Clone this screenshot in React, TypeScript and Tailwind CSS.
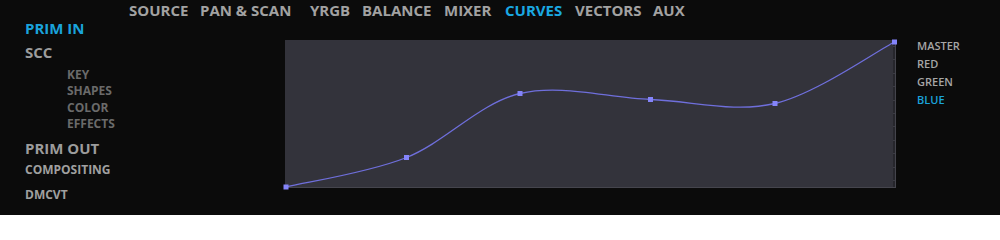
import React from "react";

const pts: [number, number][] = [
  [1, 147],
  [121.5, 117.5],
  [235, 53.5],
  [365.5, 59.5],
  [490, 63.5],
  [609.5, 2],
];

function catmull(p: [number, number][]): string {
  let d = `M${p[0][0]},${p[0][1]}`;
  for (let i = 0; i < p.length - 1; i++) {
    const p0 = p[i - 1] || p[i];
    const p1 = p[i];
    const p2 = p[i + 1];
    const p3 = p[i + 2] || p[i + 1];
    const c1x = p1[0] + (p2[0] - p0[0]) / 6;
    const c1y = p1[1] + (p2[1] - p0[1]) / 6;
    const c2x = p2[0] - (p3[0] - p1[0]) / 6;
    const c2y = p2[1] - (p3[1] - p1[1]) / 6;
    d += ` C${c1x.toFixed(2)},${c1y.toFixed(2)} ${c2x.toFixed(2)},${c2y.toFixed(2)} ${p2[0]},${p2[1]}`;
  }
  return d;
}

const tabs: { label: string; w: string; active?: boolean }[] = [
  { label: "SOURCE", w: "w-[71px]" },
  { label: "PAN & SCAN", w: "w-[110px]" },
  { label: "YRGB", w: "w-[52px]" },
  { label: "BALANCE", w: "w-[82px]" },
  { label: "MIXER", w: "w-[61px]" },
  { label: "CURVES", w: "w-[70px]", active: true },
  { label: "VECTORS", w: "w-[78px]" },
  { label: "AUX", w: "w-[40px]" },
];

export default function App() {
  const ticks = Array.from({ length: 11 }, (_, i) => i);
  return (
    <div
      className="w-[1000px] h-[215px] bg-[#0b0b0b] flex overflow-hidden"
      style={{ fontFamily: '"Open Sans", "Noto Sans", sans-serif' }}
    >
      {/* Left nav */}
      <div className="w-[129px] shrink-0 pl-[25px] pt-[18px] flex flex-col font-bold">
        <div className="h-[20px] leading-[20px] text-[15px] text-[#1aa3dc] whitespace-nowrap">PRIM IN</div>
        <div className="mt-[4px] h-[20px] leading-[20px] text-[15px] text-[#9c9c9c] whitespace-nowrap">SCC</div>
        <div className="mt-[5px] pl-[42px] flex flex-col text-[12px] leading-[16.4px] text-[#6a6a6a]">
          <div>KEY</div>
          <div>SHAPES</div>
          <div>COLOR</div>
          <div>EFFECTS</div>
        </div>
        <div className="mt-[5px] h-[20px] leading-[20px] text-[15px] text-[#9c9c9c] whitespace-nowrap">PRIM OUT</div>
        <div className="mt-[4px] h-[16px] leading-[16px] text-[12px] text-[#a0a0a0] whitespace-nowrap">COMPOSITING</div>
        <div className="mt-[9px] h-[16px] leading-[16px] text-[12px] text-[#a0a0a0] whitespace-nowrap">DMCVT</div>
      </div>

      {/* Main */}
      <div className="flex flex-col">
        <div className="h-[20px] flex font-bold text-[15px] leading-[20px] whitespace-nowrap">
          {tabs.map((t) => (
            <div key={t.label} className={`${t.w} shrink-0 ${t.active ? "text-[#1aa8e2]" : "text-[#a2a2a2]"}`}>
              {t.label}
            </div>
          ))}
        </div>
        <div className="flex">
          <div className="ml-[156px] mt-[20px] w-[611px] h-[148px] bg-[#33333b] relative border-b border-[#45454d]">
            <div className="absolute right-[1px] top-0 bottom-0 w-[2px] bg-[#26262c] flex flex-col justify-between py-[6px]">
              {ticks.map((i) => (
                <div key={i} className="h-[1px] w-[2px] bg-[#3c3c44]" />
              ))}
            </div>
            <div className="absolute right-0 top-0 bottom-0 w-[1px] bg-[#44444c]" />
            <svg className="absolute inset-0" width="611" height="148" viewBox="0 0 611 148" overflow="visible">
              <path d={catmull(pts)} fill="none" stroke="#6f6fdc" strokeWidth="1.3" />
              {pts.map(([x, y], i) => (
                <rect key={i} x={x - 2.5} y={y - 2.5} width="5" height="5" fill="#8484fa" />
              ))}
            </svg>
          </div>
          <div className="ml-[21px] mt-[17px] flex flex-col text-[11px] leading-[18px] font-semibold text-[#a6a6a6] whitespace-nowrap">
            <div>MASTER</div>
            <div>RED</div>
            <div>GREEN</div>
            <div className="text-[#1aa3dc]">BLUE</div>
          </div>
        </div>
      </div>
    </div>
  );
}
